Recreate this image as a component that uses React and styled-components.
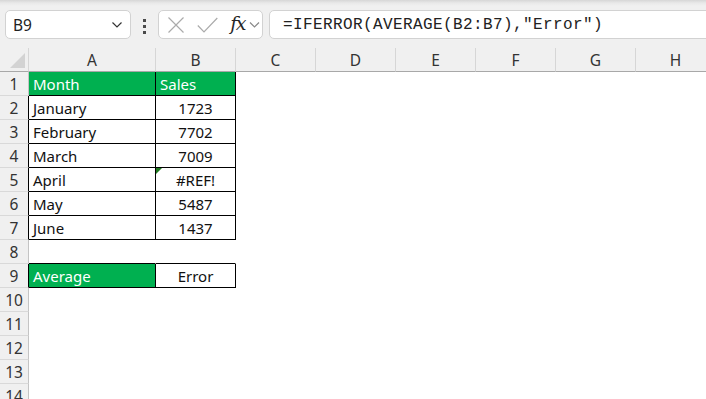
import React from 'react';
import styled, { createGlobalStyle } from 'styled-components';

const GlobalStyle = createGlobalStyle`
  html, body { margin: 0; padding: 0; background: #fff; overflow: hidden; }
  body { font-family: "Noto Sans", "Open Sans", sans-serif; }
`;

const Page = styled.div`
  width: 706px;
  height: 399px;
  overflow: hidden;
  background: #fff;
`;

const Toolbar = styled.div`
  height: 48px;
  box-sizing: border-box;
  padding: 10px 0 0 5px;
  display: flex;
  align-items: flex-start;
  background: linear-gradient(#d6d6d6 0, #e9e9e9 3px, #f0f0f0 6px);
`;

const Box = styled.div`
  height: 29px;
  box-sizing: border-box;
  background: #fff;
  border: 1px solid #d2d2d2;
  border-radius: 5px;
  display: flex;
  align-items: center;
`;

const NameBox = styled(Box)`
  width: 126px;
  padding: 0 8px 0 7px;
  justify-content: space-between;
  font-size: 15.5px;
  color: #222;
`;

const Dots = styled.div`
  width: 27px;
  padding-top: 9px;
  display: flex;
  flex-direction: column;
  align-items: center;
  gap: 3px;
`;

const Dot = styled.span`
  width: 3px;
  height: 3px;
  background: #4a4a4a;
`;

const FxGroup = styled(Box)`
  width: 105px;
  padding-left: 6px;
  gap: 0;
`;

const IconSlot = styled.div`
  width: ${p => p.$w}px;
  display: flex;
  align-items: center;
  justify-content: center;
`;

const FxText = styled.span`
  font-family: "DejaVu Serif", "Liberation Serif", serif;
  font-style: italic;
  font-size: 19px;
  line-height: 1;
  color: #262626;
  letter-spacing: -1.5px;
  margin-top: -2px;
  margin-left: 1px;
`;

const FormulaBox = styled(Box)`
  flex: 1;
  margin-left: 6px;
  margin-right: -20px;
  padding-left: 13px;
  font-family: "Liberation Mono", "DejaVu Sans Mono", monospace;
  font-size: 16px;
  letter-spacing: 0.4px;
  color: #222;
  border-radius: 5px 0 0 5px;
`;

const Row = styled.div`
  display: grid;
  grid-template-columns: 29px 127px repeat(7, 80px);
  height: 24px;
`;

const Cell = styled.div`
  position: relative;
  box-sizing: border-box;
  height: 24px;
  padding: 0 4px;
  border-right: 1px solid ${p => p.$r || 'transparent'};
  border-bottom: 1px solid ${p => p.$b || 'transparent'};
  background: ${p => (p.$green ? '#00b050' : '#fff')};
  color: ${p => (p.$green ? '#fff' : '#111')};
  text-align: ${p => (p.$center ? 'center' : 'left')};
  font-size: 15px;
  line-height: 24px;
  white-space: nowrap;
  overflow: hidden;
`;

const HeadCell = styled.div`
  position: relative;
  box-sizing: border-box;
  height: 24px;
  background: #f0f0f0;
  border-right: 1px solid ${p => p.$r || '#d6d6d6'};
  border-bottom: 1px solid ${p => p.$b || '#d9d9d9'};
  color: #333;
  text-align: center;
  font-size: 15.5px;
  line-height: 24px;
`;

const Flag = styled.span`
  position: absolute;
  left: 0;
  top: 0;
  width: 0;
  height: 0;
  border-top: 6px solid #1f7a1f;
  border-right: 6px solid transparent;
`;

const Corner = styled.svg`
  position: absolute;
  left: 8px;
  top: 5px;
`;

const COLS = ['A', 'B', 'C', 'D', 'E', 'F', 'G', 'H'];

const rows = [
  { n: 1, a: 'Month', b: 'Sales', ga: true, gb: true, table: true },
  { n: 2, a: 'January', b: '1723', table: true },
  { n: 3, a: 'February', b: '7702', table: true },
  { n: 4, a: 'March', b: '7009', table: true },
  { n: 5, a: 'April', b: '#REF!', table: true, flag: true },
  { n: 6, a: 'May', b: '5487', table: true },
  { n: 7, a: 'June', b: '1437', table: true },
  { n: 8, spacer: true },
  { n: 9, a: 'Average', b: 'Error', ga: true, table: true },
  { n: 10 },
  { n: 11 },
  { n: 12 },
  { n: 13 },
  { n: 14 },
];

const XIcon = () => (
  <svg width="18" height="16" viewBox="0 0 18 16">
    <path d="M1.5 0.5 L16.5 15.5 M16.5 0.5 L1.5 15.5" stroke="#ababab" strokeWidth="1.2" fill="none" />
  </svg>
);

const CheckIcon = () => (
  <svg width="21" height="16" viewBox="0 0 21 16">
    <path d="M0.8 8.5 L7 14.8 L20.3 1" stroke="#ababab" strokeWidth="1.2" fill="none" />
  </svg>
);

const Chevron = ({ color = '#333', w = 10, h = 6 }) => (
  <svg width={w} height={h} viewBox="0 0 10 6">
    <path d="M0.5 0.5 L5 5 L9.5 0.5" stroke={color} strokeWidth="1.2" fill="none" />
  </svg>
);

export default function App() {
  return (
    <Page>
      <GlobalStyle />
      <Toolbar>
        <NameBox>
          <span>B9</span>
          <Chevron />
        </NameBox>
        <Dots>
          <Dot />
          <Dot />
          <Dot />
        </Dots>
        <FxGroup>
          <IconSlot $w={22}><XIcon /></IconSlot>
          <IconSlot $w={40}><CheckIcon /></IconSlot>
          <IconSlot $w={20}><FxText>fx</FxText></IconSlot>
          <IconSlot $w={14}><Chevron color="#8a8a8a" w={11} h={6} /></IconSlot>
        </FxGroup>
        <FormulaBox>=IFERROR(AVERAGE(B2:B7),"Error")</FormulaBox>
      </Toolbar>

      <Row>
        <HeadCell $b="#a8a8a8" $r="#d6d6d6">
          <Corner width="18" height="16" viewBox="0 0 18 16">
            <polygon points="17,0 17,15 2,15" fill="#d3d3d3" />
          </Corner>
        </HeadCell>
        {COLS.map(c => (
          <HeadCell key={c} $b="#a8a8a8">{c}</HeadCell>
        ))}
      </Row>

      {rows.map(r => {
        const dark = '#000';
        const inTable = r.table;
        const bottomAB = inTable || r.spacer ? dark : undefined;
        return (
          <Row key={r.n}>
            <HeadCell $r={inTable && r.n !== 1 ? dark : '#c4c4c4'}>{r.n}</HeadCell>
            <Cell $green={r.ga} $r={inTable ? dark : undefined} $b={bottomAB}>
              {r.a}
            </Cell>
            <Cell $green={r.gb} $center={!r.gb} $r={inTable ? dark : undefined} $b={bottomAB}>
              {r.flag && <Flag />}
              {r.b}
            </Cell>
            {COLS.slice(2).map(c => (
              <Cell key={c} />
            ))}
          </Row>
        );
      })}
    </Page>
  );
}
